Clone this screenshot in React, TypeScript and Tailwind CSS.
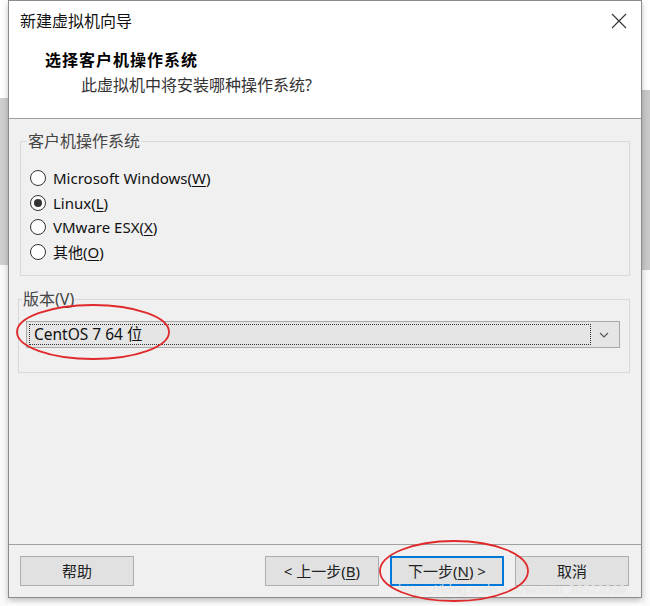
import React from "react";

const U = ({ c }: { c: string }) => <span className="underline underline-offset-[2px]">{c}</span>;

function Radio({ checked, children }: { checked?: boolean; children: React.ReactNode }) {
  return (
    <div className="h-[24.5px] flex items-center">
      <span className="ml-[3px] w-[16px] h-[16px] rounded-full border border-[#333] bg-white flex items-center justify-center">
        {checked && <span className="w-[8px] h-[8px] rounded-full bg-[#333]" />}
      </span>
      <span className="ml-[7px] text-[15px] text-[#111] leading-[20px]">{children}</span>
    </div>
  );
}

function Btn({ children, primary }: { children: React.ReactNode; primary?: boolean }) {
  return (
    <div
      className={
        "w-[114px] h-[30px] flex items-center justify-center text-[15px] text-[#222] bg-[#e1e1e1] " +
        (primary ? "border-2 border-[#0078d7]" : "border border-[#adadad]")
      }
    >
      {children}
    </div>
  );
}

export default function App() {
  return (
    <div
      className="w-[650px] h-[606px] bg-white flex relative overflow-hidden"
      style={{ fontFamily: "'Noto Sans', 'Noto Sans CJK SC', sans-serif" }}
    >
      <div className="w-[8px] flex flex-col">
        <div className="h-[98px] bg-white" />
        <div className="h-[167px] bg-[#cfcfcf]" />
        <div className="flex-1 bg-[#fafafa]" />
      </div>

      <div className="w-[634px] h-[598px] border border-[#8c8c8c] flex flex-col shadow-[0_3px_6px_rgba(0,0,0,0.25)] z-10">
        {/* title bar */}
        <div className="h-[40px] shrink-0 bg-white flex items-center justify-between pl-[11px] pr-[13px]">
          <span className="text-[16px] text-[#111] leading-[20px]">新建虚拟机向导</span>
          <svg width="16" height="16" viewBox="0 0 16 16" className="mr-[1px]">
            <path d="M1 1 L15 15 M15 1 L1 15" stroke="#333" strokeWidth="1.1" fill="none" />
          </svg>
        </div>
        {/* header */}
        <div className="h-[78px] shrink-0 bg-white border-b border-[#a0a0a0] pt-[9px]">
          <div className="pl-[36px] text-[16px] font-bold text-[#000] leading-[20px] tracking-[1px]">选择客户机操作系统</div>
          <div className="pl-[72px] mt-[5px] text-[16px] text-[#333] leading-[20px]">此虚拟机中将安装哪种操作系统?</div>
        </div>
        {/* body */}
        <div className="flex-1 bg-[#f0f0f0] flex flex-col">
          <fieldset className="mt-[12px] mx-[11px] border border-[#d9d9d9] pl-[6px] pt-[15px] pb-[11px]">
            <legend className="text-[16px] leading-[20px] text-[#444] px-[1px]">客户机操作系统</legend>
            <Radio>Microsoft Windows(<U c="W" />)</Radio>
            <Radio checked>Linux(<U c="L" />)</Radio>
            <Radio>VMware ESX(<U c="X" />)</Radio>
            <Radio>其他(<U c="O" />)</Radio>
          </fieldset>
          <fieldset className="mt-[13px] ml-[9px] mr-[11px] border border-[#d9d9d9] pl-[3px] pr-[9px] pt-[12px] pb-[24px]">
            <legend className="text-[16px] leading-[20px] text-[#444] px-[1px]">
              版本(<U c="V" />)
            </legend>
            <div className="ml-[4px] h-[27px] bg-[#e5e5e5] border border-[#a8a8a8] flex items-center p-[2px]">
              <div className="flex-1 h-full border border-dotted border-[#333] flex items-center pl-[4px] text-[15.5px] text-[#111]">
                CentOS 7 64 位
              </div>
              <div className="w-[26px] flex items-center justify-center">
                <svg width="10" height="6" viewBox="0 0 10 6">
                  <path d="M1 1 L5 5 L9 1" stroke="#555" strokeWidth="1.1" fill="none" />
                </svg>
              </div>
            </div>
          </fieldset>
        </div>
        {/* footer */}
        <div className="h-[53px] shrink-0 bg-[#f0f0f0] border-t border-[#a0a0a0] flex items-start pt-[11px] pl-[11px] pr-[12px]">
          <Btn>帮助</Btn>
          <div className="flex-1" />
          <div className="flex gap-[11px]">
            <Btn>&lt; 上一步(<U c="B" />)</Btn>
            <Btn primary>下一步(<U c="N" />) &gt;</Btn>
            <Btn>取消</Btn>
          </div>
        </div>
      </div>

      <div className="w-[8px] flex flex-col">
        <div className="h-[90px] bg-white" />
        <div className="h-[180px] bg-[#c9c9c9]" />
        <div className="flex-1 bg-[#fafafa]" />
      </div>

      {/* watermark */}
      <div className="absolute left-[398px] top-[582px] z-20 text-[12.5px] leading-[16px] text-white/75 [text-shadow:0_0_1px_rgba(0,0,0,0.2)] whitespace-nowrap">
        https://blog.csdn.net/weixin_38522098
      </div>

      {/* red annotations */}
      <svg className="absolute left-0 top-0 z-30 pointer-events-none" width="650" height="606" viewBox="0 0 650 606">
        <ellipse cx="93" cy="332" rx="76" ry="27" stroke="#e0292b" strokeWidth="1.8" fill="none" />
        <ellipse cx="454" cy="571" rx="74" ry="30" stroke="#e0292b" strokeWidth="1.8" fill="none" />
      </svg>
    </div>
  );
}
